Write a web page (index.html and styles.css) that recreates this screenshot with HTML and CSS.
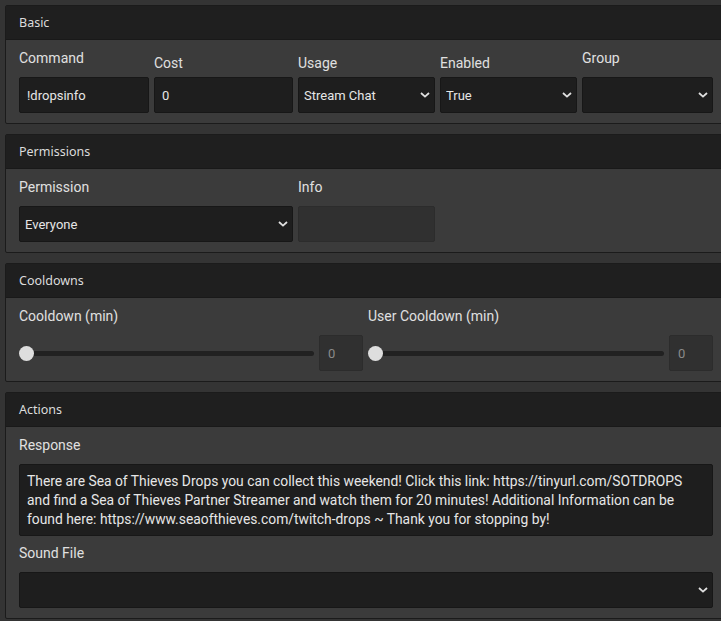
FILE: index.html
```html
<!DOCTYPE html>
<html lang="en">
<head>
<meta charset="utf-8">
<title>Command Editor</title>
<link rel="stylesheet" href="styles.css">
</head>
<body>
<div class="page">

  <section class="card">
    <header class="card-head">Basic</header>
    <div class="card-body basic-grid">
      <div class="field">
        <label class="lbl lbl-high">Command</label>
        <input class="ctl" type="text" value="!dropsinfo">
      </div>
      <div class="field">
        <label class="lbl">Cost</label>
        <input class="ctl" type="text" value="0">
      </div>
      <div class="field">
        <label class="lbl">Usage</label>
        <div class="sel">
          <select class="ctl ctl-select"><option>Stream Chat</option></select>
          <svg class="chev" width="10" height="6" viewBox="0 0 10 6"><path d="M1 1l4 3.6L9 1" fill="none" stroke="#e0e0e0" stroke-width="1.8"/></svg>
        </div>
      </div>
      <div class="field">
        <label class="lbl">Enabled</label>
        <div class="sel">
          <select class="ctl ctl-select"><option>True</option></select>
          <svg class="chev" width="10" height="6" viewBox="0 0 10 6"><path d="M1 1l4 3.6L9 1" fill="none" stroke="#e0e0e0" stroke-width="1.8"/></svg>
        </div>
      </div>
      <div class="field">
        <label class="lbl lbl-high">Group</label>
        <div class="sel">
          <select class="ctl ctl-select"><option></option></select>
          <svg class="chev" width="10" height="6" viewBox="0 0 10 6"><path d="M1 1l4 3.6L9 1" fill="none" stroke="#e0e0e0" stroke-width="1.8"/></svg>
        </div>
      </div>
    </div>
  </section>

  <section class="card">
    <header class="card-head">Permissions</header>
    <div class="card-body perm-grid">
      <div class="field">
        <label class="lbl lbl-high">Permission</label>
        <div class="sel">
          <select class="ctl ctl-select"><option>Everyone</option></select>
          <svg class="chev" width="10" height="6" viewBox="0 0 10 6"><path d="M1 1l4 3.6L9 1" fill="none" stroke="#e0e0e0" stroke-width="1.8"/></svg>
        </div>
      </div>
      <div class="field">
        <label class="lbl lbl-high">Info</label>
        <input class="ctl ctl-muted" type="text" value="">
      </div>
    </div>
  </section>

  <section class="card">
    <header class="card-head">Cooldowns</header>
    <div class="card-body cool-grid">
      <div class="field">
        <label class="lbl lbl-high">Cooldown (min)</label>
        <div class="range-row">
          <div class="track"><span class="thumb"></span></div>
          <input class="ctl ctl-muted num" type="text" value="0">
        </div>
      </div>
      <div class="field">
        <label class="lbl lbl-high">User Cooldown (min)</label>
        <div class="range-row">
          <div class="track"><span class="thumb"></span></div>
          <input class="ctl ctl-muted num" type="text" value="0">
        </div>
      </div>
    </div>
  </section>

  <section class="card">
    <header class="card-head">Actions</header>
    <div class="card-body action-stack">
      <div class="field">
        <label class="lbl lbl-high">Response</label>
        <div class="ctl textbox">There are Sea of Thieves Drops you can collect this weekend! Click this link: https://tinyurl.com/SOTDROPS and find a Sea of Thieves Partner Streamer and watch them for 20 minutes! Additional Information can be found here: https://www.seaofthieves.com/twitch-drops ~ Thank you for stopping by!</div>
      </div>
      <div class="field field-gap">
        <label class="lbl lbl-high">Sound File</label>
        <div class="sel">
          <select class="ctl ctl-select"><option></option></select>
          <svg class="chev" width="10" height="6" viewBox="0 0 10 6"><path d="M1 1l4 3.6L9 1" fill="none" stroke="#e0e0e0" stroke-width="1.8"/></svg>
        </div>
      </div>
    </div>
  </section>

</div>
</body>
</html>
```

FILE: styles.css
```css
html, body {
  margin: 0;
  padding: 0;
  overflow: hidden;
  background: #343434;
}

body {
  font-family: Roboto, "Liberation Sans", Arial, sans-serif;
  color: #e2e2e2;
}

.page {
  padding: 5px 0 0 5px;
  width: 730px;
  display: flex;
  flex-direction: column;
  gap: 10px;
}

.card {
  border: 1px solid #1b1b1b;
  background: #3b3b3b;
  border-radius: 2px;
}

.card-head {
  height: 34px;
  box-sizing: border-box;
  padding: 0 0 0 13px;
  display: flex;
  align-items: center;
  background: #1f1f1f;
  border-bottom: 1px solid #191919;
  font-family: "Noto Sans", "Open Sans", sans-serif;
  font-size: 12.5px;
  color: #dcdcdc;
}

.card-body {
  padding: 8px 14px 10px 13px;
}

.basic-grid {
  display: grid;
  grid-template-columns: 130px 139px 137px 137px 131px;
  column-gap: 5px;
  align-items: end;
}

.perm-grid {
  display: grid;
  grid-template-columns: 274px 137px;
  column-gap: 5px;
}

.cool-grid {
  display: grid;
  grid-template-columns: 344px 345px;
  column-gap: 5px;
}

.action-stack {
  display: grid;
  grid-template-columns: 694px;
}

.field {
  display: flex;
  flex-direction: column;
}

.field-gap {
  margin-top: 7px;
}

.lbl {
  font-size: 14px;
  line-height: 20px;
  color: #e0e0e0;
  margin-bottom: 4px;
}

.lbl-high {
  margin-bottom: 9px;
}

.ctl {
  box-sizing: border-box;
  height: 36px;
  width: 100%;
  margin: 0;
  padding: 0 7px;
  background: #1e1e1e;
  border: 1px solid #171717;
  border-radius: 2px;
  color: #e6e6e6;
  font-family: Roboto, "Liberation Sans", Arial, sans-serif;
  font-size: 13px;
  outline: none;
}

.ctl-muted {
  background: #303030;
  border-color: #2c2c2c;
  color: #8a8a8a;
}

.sel {
  position: relative;
}

.ctl-select {
  appearance: none;
  -webkit-appearance: none;
  padding-left: 5px;
  padding-right: 20px;
}

.chev {
  position: absolute;
  right: 5px;
  top: 15px;
  pointer-events: none;
}

.range-row {
  display: flex;
  align-items: center;
  gap: 5px;
}

.track {
  position: relative;
  flex: 1;
  height: 5px;
  margin-left: 1px;
  border-radius: 3px;
  background: #212121;
}

.thumb {
  position: absolute;
  left: -1px;
  top: -5px;
  width: 15px;
  height: 15px;
  border-radius: 50%;
  background: #dedede;
}

.num {
  width: 44px;
  flex: none;
  padding-left: 8px;
}

.textbox {
  height: 72px;
  padding: 7px 7px;
  line-height: 19px;
  font-size: 13.85px;
}
```
